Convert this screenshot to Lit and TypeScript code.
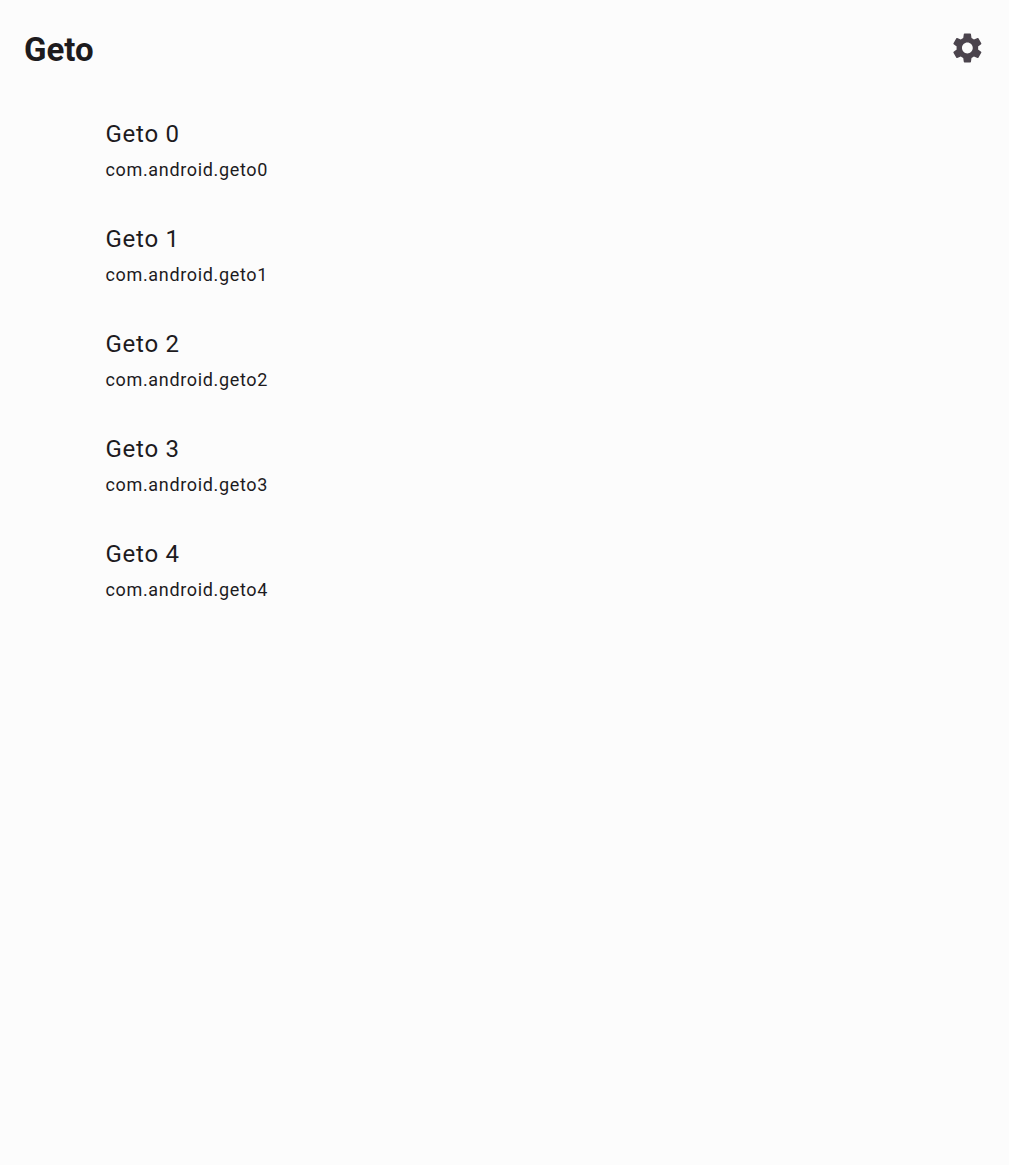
import { LitElement, html, css } from "lit";
import { customElement, property } from "lit/decorators.js";

@customElement("app-item")
class AppItem extends LitElement {
  @property() label = "";
  @property() packageName = "";

  static styles = css`
    :host {
      display: flex;
      flex-direction: column;
      box-sizing: border-box;
      height: 105px;
      padding: 16px 15px 0 105.5px;
      color: #1d1b1e;
    }
    .label {
      font-size: 24px;
      line-height: 36px;
      letter-spacing: 0.75px;
    }
    .package {
      margin-top: 6px;
      font-size: 18px;
      line-height: 24px;
      letter-spacing: 0.66px;
    }
  `;

  render() {
    return html`
      <div class="label">${this.label}</div>
      <div class="package">${this.packageName}</div>
    `;
  }
}

@customElement("app-root")
class AppRoot extends LitElement {
  static styles = css`
    :host {
      display: block;
      min-height: 100vh;
      background: #fcfcfc;
      font-family: Roboto, "Liberation Sans", sans-serif;
    }
    .bar {
      display: flex;
      align-items: center;
      justify-content: space-between;
      box-sizing: border-box;
      height: 96px;
      padding: 0 24px;
    }
    .title {
      margin: 0;
      padding-top: 3px;
      font-size: 33px;
      line-height: 42px;
      font-weight: 700;
      color: #1d1b1e;
    }
    .settings {
      display: flex;
      padding: 0;
      border: 0;
      background: none;
      color: #4b444d;
    }
    .settings svg {
      width: 36px;
      height: 36px;
      fill: currentColor;
    }
    .list {
      display: flex;
      flex-direction: column;
      padding-top: 4px;
    }
  `;

  render() {
    return html`
      <header class="bar">
        <h1 class="title">Geto</h1>
        <button class="settings" aria-label="Settings">
          <svg viewBox="0 0 24 24">
            <path transform="translate(0.25 0)" d="M19.14,12.94c0.04,-0.3 0.06,-0.61 0.06,-0.94c0,-0.32 -0.02,-0.64 -0.07,-0.94l2.03,-1.58c0.18,-0.14 0.23,-0.41 0.12,-0.61l-1.92,-3.32c-0.12,-0.22 -0.37,-0.29 -0.59,-0.22l-2.39,0.96c-0.5,-0.38 -1.03,-0.7 -1.62,-0.94L14.4,2.81c-0.04,-0.24 -0.24,-0.41 -0.48,-0.41h-3.84c-0.24,0 -0.43,0.17 -0.47,0.41L9.25,5.35C8.66,5.59 8.12,5.92 7.63,6.29L5.24,5.33c-0.22,-0.08 -0.47,0 -0.59,0.22L2.74,8.87C2.62,9.08 2.66,9.34 2.86,9.48l2.03,1.58C4.84,11.36 4.8,11.69 4.8,12s0.02,0.64 0.07,0.94l-2.03,1.58c-0.18,0.14 -0.23,0.41 -0.12,0.61l1.92,3.32c0.12,0.22 0.37,0.29 0.59,0.22l2.39,-0.96c0.5,0.38 1.03,0.7 1.62,0.94l0.36,2.54c0.05,0.24 0.24,0.41 0.48,0.41h3.84c0.24,0 0.44,-0.17 0.47,-0.41l0.36,-2.54c0.59,-0.24 1.13,-0.56 1.62,-0.94l2.39,0.96c0.22,0.08 0.47,0 0.59,-0.22l1.92,-3.32c0.12,-0.22 0.07,-0.47 -0.12,-0.61L19.14,12.94zM12,15.6c-1.98,0 -3.6,-1.62 -3.6,-3.6s1.62,-3.6 3.6,-3.6s3.6,1.62 3.6,3.6S13.98,15.6 12,15.6z" />
          </svg>
        </button>
      </header>
      <main class="list">
        ${[0, 1, 2, 3, 4].map(
          (i) => html`<app-item .label=${`Geto ${i}`} .packageName=${`com.android.geto${i}`}></app-item>`,
        )}
      </main>
    `;
  }
}
